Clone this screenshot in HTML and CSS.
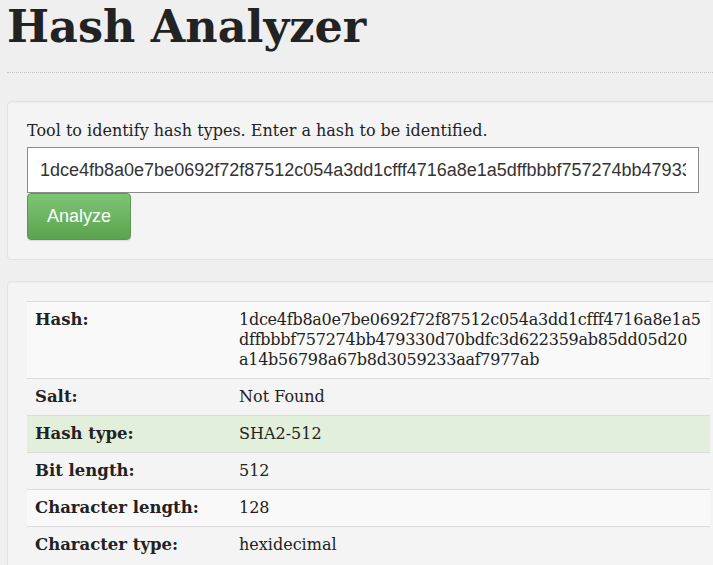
FILE: index.html
```html
<!DOCTYPE html>
<html>
<head>
<meta charset="utf-8">
<title>Hash Analyzer</title>
<link rel="stylesheet" href="styles.css">
</head>
<body>
<div class="page">
  <h1 class="title">Hash Analyzer</h1>
  <div class="well">
    <form class="hash-form">
      <label class="intro" for="hash">Tool to identify hash types. Enter a hash to be identified.</label>
      <input id="hash" class="hash-input" type="text" value="1dce4fb8a0e7be0692f72f87512c054a3dd1cfff4716a8e1a5dffbbbf757274bb479330d70bdfc3d622359ab85dd05d20a14b56798a67b8d3059233aaf7977ab">
      <button type="button" class="btn-analyze">Analyze</button>
    </form>
  </div>
  <div class="well results">
    <table class="result-table">
      <colgroup>
        <col class="col-label">
        <col class="col-value">
      </colgroup>
      <tr class="striped">
        <th>Hash:</th>
        <td class="hash-value"><span class="line">1dce4fb8a0e7be0692f72f87512c054a3dd1cfff4716a8e1a5</span><span class="line">dffbbbf757274bb479330d70bdfc3d622359ab85dd05d20</span><span class="line">a14b56798a67b8d3059233aaf7977ab</span></td>
      </tr>
      <tr>
        <th>Salt:</th>
        <td>Not Found</td>
      </tr>
      <tr class="success">
        <th>Hash type:</th>
        <td>SHA2-512</td>
      </tr>
      <tr>
        <th>Bit length:</th>
        <td>512</td>
      </tr>
      <tr class="striped">
        <th>Character length:</th>
        <td>128</td>
      </tr>
      <tr>
        <th>Character type:</th>
        <td>hexidecimal</td>
      </tr>
    </table>
  </div>
</div>
</body>
</html>
```
FILE: styles.css
```css
html, body {
  margin: 0;
  padding: 0;
  overflow: hidden;
  background: #efefef;
}
body {
  font-family: "DejaVu Serif", Georgia, serif;
  color: #222;
}
.page {
  width: 722px;
  padding-left: 7px;
}
.title {
  margin: 0;
  font-size: 44.5px;
  line-height: 52px;
  font-weight: bold;
  color: #222;
  padding-bottom: 20px;
  border-bottom: 1px dotted #c4c4c4;
}
.well {
  margin-top: 28px;
  background: #f4f4f4;
  border: 1px solid #e2e2e2;
  border-radius: 4px;
  padding: 19px;
  box-shadow: inset 0 1px 1px rgba(0,0,0,0.03);
}
.results {
  margin-top: 21px;
}
.hash-form {
  display: flex;
  flex-direction: column;
  align-items: flex-start;
}
.intro {
  font-size: 16px;
  line-height: 20px;
  margin-bottom: 6px;
  color: #222;
}
.hash-input {
  box-sizing: border-box;
  width: 672px;
  height: 46px;
  margin: 0;
  border: 1px solid #8a8a8a;
  background: #fff;
  padding: 0 12px;
  font-family: "Liberation Sans", Arial, sans-serif;
  font-size: 18px;
  color: #333;
  outline: none;
}
.btn-analyze {
  box-sizing: border-box;
  width: 104px;
  height: 47px;
  margin: 0;
  border: 1px solid #5a9a4f;
  border-radius: 4px;
  background: linear-gradient(#7dc575, #5ca34f);
  color: #fff;
  font-family: "Liberation Sans", Arial, sans-serif;
  font-size: 18px;
  box-shadow: 0 1px 1px rgba(0,0,0,0.1);
}
.result-table {
  width: 683px;
  table-layout: fixed;
  border-collapse: collapse;
  font-size: 16px;
  line-height: 20px;
  color: #222;
}
.col-label {
  width: 212px;
}
.result-table th,
.result-table td {
  border-top: 1px solid #dcdcdc;
  padding: 8px;
  vertical-align: top;
  text-align: left;
}
.result-table td {
  padding-left: 0;
}
.result-table th {
  font-weight: bold;
  font-size: 16.5px;
}
.hash-value {
  letter-spacing: -0.26px;
}
.striped {
  background: #f9f9f9;
}
.success {
  background: #e1efdb;
}
.line {
  display: block;
  white-space: nowrap;
}
```
